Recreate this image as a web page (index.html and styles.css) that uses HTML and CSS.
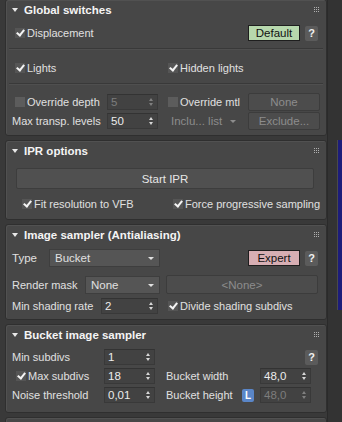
FILE: index.html
```html
<!DOCTYPE html>
<html lang="en">

<head>
    <meta charset="UTF-8">
    <meta name="viewport" content="width=device-width, initial-scale=1.0">
    <title>V-Ray settings</title>
    <link rel="stylesheet" href="styles.css">
</head>

<body>
    <div class="screen">
        <div class="rollouts">

            <!-- Global switches -->
            <div class="rollout r-global">
                <div class="head"><span class="tri"></span>Global switches<span class="grip"></span></div>
                <div class="row row-disp">
                    <label class="chk on"><i></i>Displacement</label>
                    <span class="btn mode green">Default</span>
                    <span class="btn help">?</span>
                </div>
                <div class="sep"></div>
                <div class="row row-lights">
                    <label class="chk on"><i></i>Lights</label>
                    <label class="chk on"><i></i>Hidden lights</label>
                </div>
                <div class="sep"></div>
                <div class="row grid-ov">
                    <label class="chk"><i></i>Override depth</label>
                    <span class="spin off">5<b></b></span>
                    <label class="chk col3"><i></i>Override mtl</label>
                    <span class="btn plain off">None</span>
                </div>
                <div class="row grid-ov">
                    <span class="lbl">Max transp. levels</span>
                    <span class="spin">50<b></b></span>
                    <span class="combo flat off">Inclu... list<em></em></span>
                    <span class="btn plain off">Exclude...</span>
                </div>
            </div>

            <!-- IPR options -->
            <div class="rollout r-ipr">
                <div class="head"><span class="tri"></span>IPR options<span class="grip"></span></div>
                <div class="row row-start">
                    <span class="btn big">Start IPR</span>
                </div>
                <div class="row row-fit">
                    <label class="chk on"><i></i>Fit resolution to VFB</label>
                    <label class="chk on"><i></i>Force progressive sampling</label>
                </div>
            </div>

            <!-- Image sampler -->
            <div class="rollout r-sampler">
                <div class="head"><span class="tri"></span>Image sampler (Antialiasing)<span class="grip"></span></div>
                <div class="row row-type">
                    <span class="lbl">Type</span>
                    <span class="combo type">Bucket<em></em></span>
                    <span class="btn mode pink">Expert</span>
                    <span class="btn help">?</span>
                </div>
                <div class="row row-mask">
                    <span class="lbl">Render mask</span>
                    <span class="combo mask">None<em></em></span>
                    <span class="btn plain wide off">&lt;None&gt;</span>
                </div>
                <div class="row row-rate">
                    <span class="lbl">Min shading rate</span>
                    <span class="spin rate">2<b></b></span>
                    <label class="chk"><i class="tick"></i>Divide shading subdivs</label>
                </div>
            </div>

            <!-- Bucket image sampler -->
            <div class="rollout r-bucket">
                <div class="head"><span class="tri"></span>Bucket image sampler<span class="grip"></span></div>
                <div class="row grid-bk">
                    <span class="lbl">Min subdivs</span>
                    <span class="spin">1<b></b></span>
                    <span></span>
                    <span class="btn help">?</span>
                </div>
                <div class="row grid-bk">
                    <label class="chk on mx"><i></i>Max subdivs</label>
                    <span class="spin">18<b></b></span>
                    <span class="lbl">Bucket width</span>
                    <span class="spin">48,0<b></b></span>
                </div>
                <div class="row grid-bk">
                    <span class="lbl">Noise threshold</span>
                    <span class="spin">0,01<b></b></span>
                    <span class="lbl bh">Bucket height<span class="lock">L</span></span>
                    <span class="spin off">48,0<b></b></span>
                </div>
            </div>

            <div class="rollout r-next"></div>
        </div>

        <div class="side">
            <div class="view"></div>
        </div>
    </div>
</body>

</html>
```

FILE: styles.css
```css
:root {
    --panel-bg: #474747;
    --outer-bg: #393939;
    --text: #e0e0e0;
    --dim: #8c8c8c;
}

html, body {
    margin: 0;
    height: 100%;
}

body {
    background-color: var(--outer-bg);
    font-family: "Liberation Sans", Arial, sans-serif;
    font-size: 11px;
    color: var(--text);
    overflow: hidden;
}

.screen {
    display: flex;
    height: 422px;
}

.rollouts {
    width: 327px;
    padding-left: 5px;
    box-sizing: border-box;
}

.rollout {
    position: relative;
    width: 322px;
    box-sizing: border-box;
    background-color: var(--panel-bg);
    border: 1px solid #2f2f2f;
    border-radius: 3px;
    margin-bottom: 4px;
    box-shadow: inset 1px 1px 0 #515151;
}

.r-global { height: 137px; margin-top: -1px; }
.r-ipr { height: 80px; }
.r-sampler { height: 96px; }
.r-bucket { height: 89px; }
.r-next { height: 20px; }

.head {
    position: relative;
    height: 21px;
    line-height: 21px;
    padding-left: 18px;
    font-weight: bold;
    font-size: 11.5px;
    color: #f4f4f4;
}

.tri {
    position: absolute;
    left: 6px;
    top: 8px;
    border-left: 3px solid transparent;
    border-right: 3px solid transparent;
    border-top: 4px solid #e8e8e8;
}

/* 3x3 dotted grip, drawn with shadows of one dot */
.grip {
    position: absolute;
    right: 11px;
    top: 7px;
    width: 1px;
    height: 1px;
    background-color: #b0b0b0;
    box-shadow:
        2px 0 #b0b0b0, 4px 0 #b0b0b0,
        0 2px #b0b0b0, 2px 2px #b0b0b0, 4px 2px #b0b0b0,
        0 4px #b0b0b0, 2px 4px #b0b0b0, 4px 4px #b0b0b0;
}

.row {
    display: flex;
    align-items: center;
}

.lbl {
    white-space: nowrap;
}

/* checkboxes */
.chk {
    display: flex;
    align-items: center;
    white-space: nowrap;
}

.chk i {
    width: 10px;
    height: 10px;
    background-color: #5c5c5c;
    margin-right: 2px;
    position: relative;
}

.chk.on i,
.chk i.tick {
    background-color: #555;
}

.chk.on i::after,
.chk i.tick::after {
    content: "";
    position: absolute;
    left: 3px;
    top: 0px;
    width: 3px;
    height: 6px;
    border-right: 2px solid #f4f4f4;
    border-bottom: 2px solid #f4f4f4;
    transform: rotate(38deg);
}

/* buttons */
.btn {
    box-sizing: border-box;
    display: flex;
    align-items: center;
    justify-content: center;
    white-space: nowrap;
}

.mode {
    width: 52px;
    height: 16px;
    border: 1px solid #1e1e1e;
    color: #111;
    font-size: 11.5px;
}

.green { background-color: #b7d8ad; }
.pink { background-color: #d7aeb3; }

.help {
    width: 13px;
    height: 15px;
    margin-left: 5px;
    background-color: #5b5b5b;
    border-radius: 2px;
    color: #f0f0f0;
    font-weight: bold;
    font-size: 11px;
}

.plain {
    width: 72px;
    height: 18px;
    background-color: #4c4c4c;
    border: 1px solid #3c3c3c;
    border-radius: 2px;
    font-size: 11.5px;
}

.off {
    color: var(--dim);
}

.big {
    width: 298px;
    height: 21px;
    background-color: #505050;
    border: 1px solid #3d3d3d;
    border-radius: 2px;
    color: #e6e6e6;
    font-size: 11.5px;
}

.wide {
    width: 152px;
    height: 19px;
}

/* spinners */
.spin {
    position: relative;
    box-sizing: border-box;
    width: 51px;
    height: 16px;
    line-height: 14px;
    padding-left: 3px;
    background-color: #424242;
    border: 1px solid #393939;
    border-top-color: #333;
    font-size: 11.5px;
    color: #ececec;
}

.spin.off {
    color: #7d7d7d;
}

.spin b {
    position: absolute;
    right: 4px;
    top: 3px;
    width: 0;
    height: 0;
    border-left: 2px solid transparent;
    border-right: 2px solid transparent;
    border-bottom: 3px solid #d8d8d8;
}

.spin b::after {
    content: "";
    position: absolute;
    left: -2px;
    top: 5px;
    border-left: 2px solid transparent;
    border-right: 2px solid transparent;
    border-top: 3px solid #d8d8d8;
}

.spin.off b,
.spin.off b::after {
    border-bottom-color: #808080;
    border-top-color: #808080;
}

/* dropdowns */
.combo {
    position: relative;
    box-sizing: border-box;
    height: 18px;
    line-height: 16px;
    padding-left: 5px;
    background-color: #555;
    border: 1px solid #3e3e3e;
    font-size: 11.5px;
    white-space: nowrap;
}

.combo em {
    position: absolute;
    right: 5px;
    top: 7px;
    border-left: 3px solid transparent;
    border-right: 3px solid transparent;
    border-top: 3px solid #e0e0e0;
}

.combo.flat {
    background-color: transparent;
    border-color: transparent;
    padding-left: 0;
}

.combo.flat em {
    right: 6px;
    border-top-color: #8d8d8d;
}

/* Global switches rows */
.row-disp {
    height: 16px;
    margin-top: 4px;
    padding-left: 9px;
}

.row-disp .chk { width: 233px; }

.sep {
    height: 0;
    margin: 7px 3px 0 3px;
    border-top: 1px solid #393939;
    border-bottom: 1px solid #4f4f4f;
}

.row-lights {
    height: 16px;
    margin-top: 10px;
    padding-left: 9px;
}

.row-lights .chk:first-child { width: 153px; }

.grid-ov {
    display: grid;
    grid-template-columns: 95px 51px 90px 72px;
    align-items: center;
    height: 18px;
    padding-left: 6px;
}

.r-global .sep + .grid-ov {
    margin-top: 8px;
}

.grid-ov + .grid-ov {
    margin-top: 1px;
}

.grid-ov .chk { margin-left: 3px; }
.grid-ov .col3 { margin-left: 10px; }
.grid-ov .combo.flat { margin-left: 12px; width: 73px; }

/* IPR rows */
.row-start {
    margin-top: 6px;
    padding-left: 10px;
}

.row-fit {
    margin-top: 7px;
    height: 16px;
    padding-left: 16px;
}

.row-fit .chk:first-child { width: 151px; }

/* Image sampler rows */
.row-type {
    margin-top: 3px;
    height: 18px;
    padding-left: 6px;
}

.row-type .lbl { width: 37px; font-size: 11.5px; }
.row-type .type { width: 111px; margin-right: 88px; }

.row-mask {
    margin-top: 8px;
    height: 19px;
    padding-left: 6px;
}

.row-mask .lbl { width: 73px; }
.row-mask .mask { width: 75px; margin-right: 6px; }

.row-rate {
    margin-top: 4px;
    height: 16px;
    padding-left: 6px;
}

.row-rate .lbl { width: 89px; }
.row-rate .rate { width: 57px; margin-right: 10px; }

/* Bucket rows */
.grid-bk {
    display: grid;
    grid-template-columns: 92px 54px 102px 58px;
    align-items: center;
    height: 16px;
    padding-left: 6px;
}

.grid-bk > :nth-child(3) { margin-left: 8px; }
.grid-bk .help { justify-self: end; }

.grid-bk + .grid-bk { margin-top: 3px; }
.r-bucket .head + .grid-bk { margin-top: 3px; }

.chk.mx { margin-left: 4px; }

.bh {
    display: flex;
    align-items: center;
    justify-content: space-between;
}

.lock {
    width: 12px;
    height: 13px;
    margin-right: 6px;
    background-color: #5a86c8;
    border-radius: 2px;
    color: #fff;
    font-size: 10px;
    font-weight: bold;
    display: flex;
    align-items: center;
    justify-content: center;
}

/* right strip */
.side {
    width: 15px;
    display: flex;
    justify-content: flex-end;
    background-color: #333;
    border-left: 1px solid #2a2a2a;
    box-sizing: border-box;
}

.view {
    width: 4px;
    margin-top: 140px;
    height: 170px;
    background-color: #1c1c7a;
    border-left: 1px solid #4a4a4a;
}
```
